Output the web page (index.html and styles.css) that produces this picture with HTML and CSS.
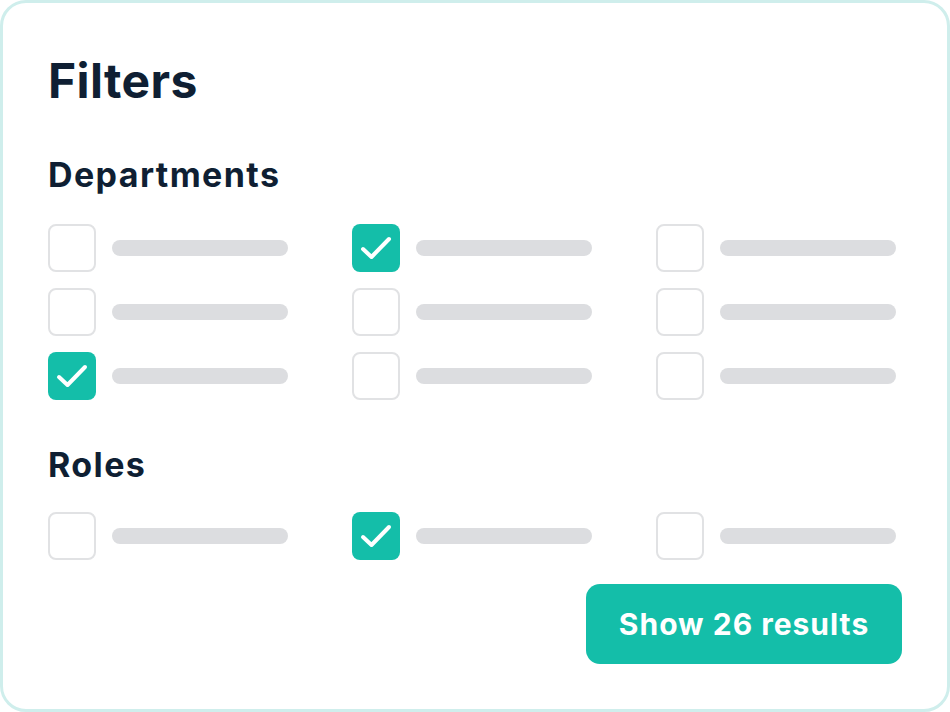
FILE: index.html
```html
<!DOCTYPE html>
<html>
<head>
<meta charset="utf-8">
<link rel="stylesheet" href="styles.css">
</head>
<body>
<div class="card">
  <h1 class="title">Filters</h1>
  <h2 class="section">Departments</h2>
  <div class="grid">
    <div class="item"><span class="box"></span><span class="bar"></span></div>
    <div class="item"><span class="box on"><svg viewBox="0 0 48 48"><path d="M11 25 L19.5 33 L37 15"/></svg></span><span class="bar"></span></div>
    <div class="item"><span class="box"></span><span class="bar"></span></div>
    <div class="item"><span class="box"></span><span class="bar"></span></div>
    <div class="item"><span class="box"></span><span class="bar"></span></div>
    <div class="item"><span class="box"></span><span class="bar"></span></div>
    <div class="item"><span class="box on"><svg viewBox="0 0 48 48"><path d="M11 25 L19.5 33 L37 15"/></svg></span><span class="bar"></span></div>
    <div class="item"><span class="box"></span><span class="bar"></span></div>
    <div class="item"><span class="box"></span><span class="bar"></span></div>
  </div>
  <h2 class="section roles">Roles</h2>
  <div class="grid roles-grid">
    <div class="item"><span class="box"></span><span class="bar"></span></div>
    <div class="item"><span class="box on"><svg viewBox="0 0 48 48"><path d="M11 25 L19.5 33 L37 15"/></svg></span><span class="bar"></span></div>
    <div class="item"><span class="box"></span><span class="bar"></span></div>
  </div>
  <div class="actions">
    <button class="btn">Show 26 results</button>
  </div>
</div>
</body>
</html>
```
FILE: styles.css
```css
html, body {
  margin: 0;
  padding: 0;
  background: #ffffff;
}
body {
  font-family: Inter, "Noto Sans", sans-serif;
  color: #0f1f33;
}
.card {
  box-sizing: border-box;
  width: 950px;
  height: 712px;
  border: 3px solid #cfeeec;
  border-radius: 26px;
  background: #fff;
  padding: 0 0 0 45px;
  display: flex;
  flex-direction: column;
}
.title {
  margin: 52px 0 0 0;
  font-size: 48px;
  line-height: 52px;
  font-weight: 700;
  letter-spacing: 0.4px;
}
.section {
  margin: 48px 0 0 0;
  font-size: 34px;
  line-height: 40px;
  font-weight: 700;
  letter-spacing: 1.4px;
}
.section.roles {
  margin-top: 45px;
}
.grid {
  margin-top: 29px;
  display: grid;
  grid-template-columns: repeat(3, 240px);
  column-gap: 64px;
  row-gap: 16px;
}
.grid.roles-grid {
  margin-top: 27px;
}
.item {
  display: flex;
  align-items: center;
  gap: 16px;
}
.box {
  box-sizing: border-box;
  width: 48px;
  height: 48px;
  border: 2px solid #e1e2e4;
  border-radius: 8px;
  flex: none;
  display: block;
}
.box.on {
  background: #14bea9;
  border: none;
}
.box svg {
  display: block;
  width: 48px;
  height: 48px;
}
.box svg path {
  fill: none;
  stroke: #fff;
  stroke-width: 4;
  stroke-linecap: round;
  stroke-linejoin: round;
}
.bar {
  flex: 1;
  height: 16px;
  border-radius: 8px;
  background: #dcdde0;
}
.actions {
  display: flex;
  justify-content: flex-end;
  padding-right: 45px;
  margin-top: 24px;
}
.btn {
  width: 316px;
  height: 80px;
  border: none;
  border-radius: 14px;
  background: #14bea9;
  color: #fff;
  font-family: Inter, "Noto Sans", sans-serif;
  font-size: 30px;
  font-weight: 700;
  letter-spacing: 1px;
  cursor: pointer;
}
```
